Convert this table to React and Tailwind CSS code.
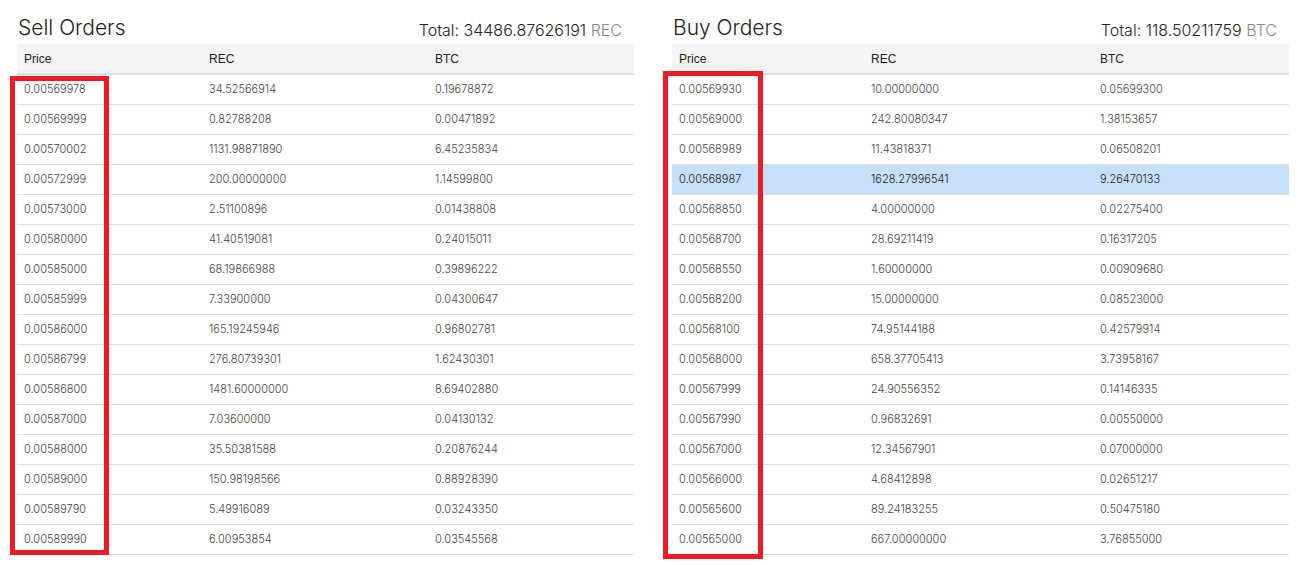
const sellRows = [
    ["0.00569978", "34.52566914", "0.19678872"],
    ["0.00569999", "0.82788208", "0.00471892"],
    ["0.00570002", "1131.98871890", "6.45235834"],
    ["0.00572999", "200.00000000", "1.14599800"],
    ["0.00573000", "2.51100896", "0.01438808"],
    ["0.00580000", "41.40519081", "0.24015011"],
    ["0.00585000", "68.19866988", "0.39896222"],
    ["0.00585999", "7.33900000", "0.04300647"],
    ["0.00586000", "165.19245946", "0.96802781"],
    ["0.00586799", "276.80739301", "1.62430301"],
    ["0.00586800", "1481.60000000", "8.69402880"],
    ["0.00587000", "7.03600000", "0.04130132"],
    ["0.00588000", "35.50381588", "0.20876244"],
    ["0.00589000", "150.98198566", "0.88928390"],
    ["0.00589790", "5.49916089", "0.03243350"],
    ["0.00589990", "6.00953854", "0.03545568"],
]

const buyRows = [
    ["0.00569930", "10.00000000", "0.05699300"],
    ["0.00569000", "242.80080347", "1.38153657"],
    ["0.00568989", "11.43818371", "0.06508201"],
    ["0.00568987", "1628.27996541", "9.26470133"],
    ["0.00568850", "4.00000000", "0.02275400"],
    ["0.00568700", "28.69211419", "0.16317205"],
    ["0.00568550", "1.60000000", "0.00909680"],
    ["0.00568200", "15.00000000", "0.08523000"],
    ["0.00568100", "74.95144188", "0.42579914"],
    ["0.00568000", "658.37705413", "3.73958167"],
    ["0.00567999", "24.90556352", "0.14146335"],
    ["0.00567990", "0.96832691", "0.00550000"],
    ["0.00567000", "12.34567901", "0.07000000"],
    ["0.00566000", "4.68412898", "0.02651217"],
    ["0.00565600", "89.24183255", "0.50475180"],
    ["0.00565000", "667.00000000", "3.76855000"],
]

const OrderTable = ({ title, total, unit, rows, cols, highlight }) => {
    return (
        <div className="w-[617px] shrink-0">
            <div className="flex items-end justify-between h-[44px] pb-[6px] pr-[12px]">
                <h2 className="text-[21px] font-light leading-none text-[#222] pl-px">{title}</h2>
                <div className="text-[16px] font-light leading-none text-[#222]">
                    Total: {total} <span className="text-[#888]">{unit}</span>
                </div>
            </div>
            <div className="flex h-[31px] items-center bg-[#f4f4f4] border-b-2 border-[#dddddd] text-[12px] text-[#222] font-['Liberation_Sans',sans-serif]">
                <div className={`${cols[0]} pl-[7px]`}>Price</div>
                <div className={`${cols[1]} pl-[7px]`}>REC</div>
                <div className={`${cols[2]} pl-[7px]`}>BTC</div>
            </div>
            {rows.map((r, i) => (
                <div
                    key={i}
                    className={`flex h-[30px] items-center border-b border-[#dddddd] text-[11px] font-light ${
                        i === highlight ? "bg-[#c6e0fa] text-[#222]" : "text-[#444]"
                    }`}
                >
                    <div className={`${cols[0]} pl-[7px]`}>{r[0]}</div>
                    <div className={`${cols[1]} pl-[7px]`}>{r[1]}</div>
                    <div className={`${cols[2]} pl-[7px]`}>{r[2]}</div>
                </div>
            ))}
        </div>
    )
}

export default function App() {
    return (
        <div className="relative h-[565px] w-[1303px] overflow-hidden bg-white font-['Inter',sans-serif]">
            <div className="flex gap-[38px] pl-[17px]">
                <OrderTable
                    title="Sell Orders"
                    total="34486.87626191"
                    unit="REC"
                    rows={sellRows}
                    cols={["w-[185px]", "w-[226px]", "w-[206px]"]}
                />
                <OrderTable
                    title="Buy Orders"
                    total="118.50211759"
                    unit="BTC"
                    rows={buyRows}
                    cols={["w-[192px]", "w-[229px]", "w-[196px]"]}
                    highlight={3}
                />
            </div>
            {/* red annotation boxes */}
            <div className="absolute left-[10px] top-[76px] w-[99px] h-[479px] border-[5px] border-[#ed1c24]" />
            <div className="absolute left-[663px] top-[71px] w-[100px] h-[488px] border-[5px] border-[#ed1c24]" />
        </div>
    )
}
